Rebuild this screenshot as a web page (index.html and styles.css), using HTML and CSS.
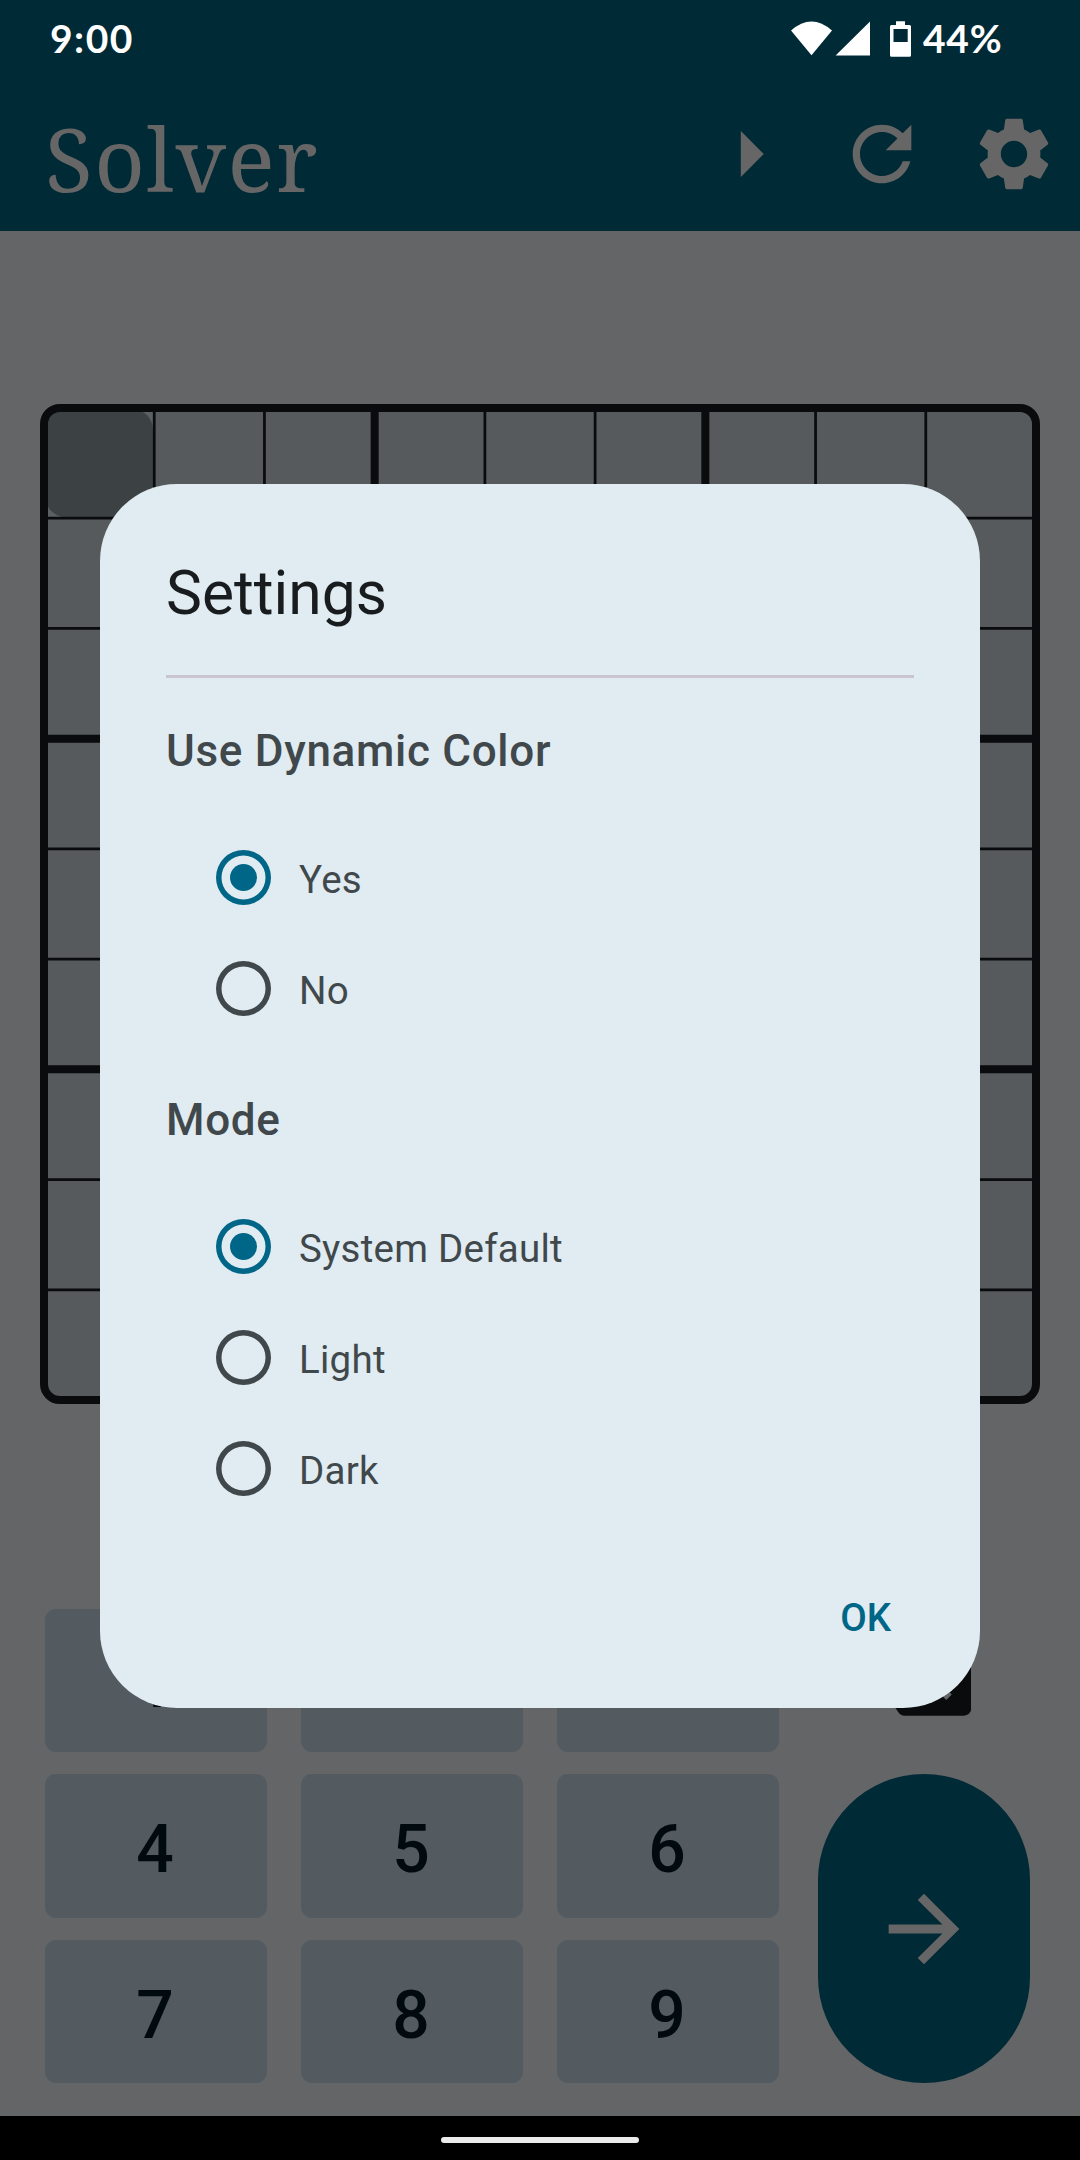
FILE: index.html
```html
<!DOCTYPE html>
<html lang="en">
<head>
<meta charset="utf-8">
<title>Solver</title>
<link rel="stylesheet" href="styles.css">
</head>
<body>
<div class="screen">
  <header class="top">
    <div class="status">
      <span class="clock">9:00</span>
      <svg class="status-icons" width="122" height="38" viewBox="790 20 122 38" fill="#fff">
        <path d="M791 30.5Q811.500 12.500 832 30.500L811.500 55.300z"/>
        <path d="M870 21.500V55.500H835.600z"/>
        <path fill-rule="evenodd" d="M896 21.300h9V25h4.500q1.500 0 1.500 1.500V55.300q0 1.500-1.500 1.500h-18q-1.500 0-1.500-1.500V26.500q0-1.500 1.500-1.500H896zM893.500 29v13h14.200V29z"/>
      </svg>
      <span class="battery">44%</span>
    </div>
    <div class="appbar">
      <h1 class="title">Solver</h1>
      <svg class="ico-play" viewBox="0 0 24 24"><path d="M10 17l5-5-5-5z"/></svg>
      <svg class="ico-refresh" viewBox="0 0 24 24"><path d="M17.650 6.350C16.200 4.900 14.210 4 12 4c-4.420 0-7.990 3.580-7.990 8s3.570 8 7.990 8c3.730 0 6.840-2.550 7.730-6h-2.080c-.82 2.330-3.040 4-5.650 4-3.310 0-6-2.690-6-6s2.690-6 6-6c1.660 0 3.140.69 4.220 1.780L13 11h7V4z"/></svg>
      <svg class="ico-settings" viewBox="0 0 24 24"><path d="M19.14,12.94c0.04-0.3,0.06-0.61,0.06-0.94c0-0.32-0.02-0.64-0.07-0.94l2.03-1.58c0.18-0.14,0.23-0.41,0.12-0.61l-1.92-3.32c-0.12-0.22-0.37-0.29-0.59-0.22l-2.39,0.96c-0.5-0.38-1.03-0.7-1.62-0.94L14.4,2.81c-0.04-0.24-0.24-0.41-0.48-0.41h-3.84c-0.24,0-0.43,0.17-0.47,0.41L9.25,5.35C8.66,5.59,8.12,5.92,7.63,6.29L5.24,5.33c-0.22-0.08-0.47,0-0.59,0.22L2.74,8.87C2.62,9.08,2.66,9.34,2.86,9.48l2.03,1.58C4.84,11.36,4.8,11.69,4.8,12s0.02,0.64,0.07,0.94l-2.03,1.58c-0.18,0.14-0.23,0.41-0.12,0.61l1.92,3.32c0.12,0.22,0.37,0.29,0.59,0.22l2.39-0.96c0.5,0.38,1.03,0.7,1.62,0.94l0.36,2.54c0.05,0.24,0.24,0.41,0.48,0.41h3.84c0.24,0,0.44-0.17,0.47-0.41l0.36-2.54c0.59-0.24,1.13-0.56,1.62-0.94l2.39,0.96c0.22,0.08,0.47,0,0.59-0.22l1.92-3.32c0.12-0.22,0.07-0.47-0.12-0.61L19.14,12.94z M12,15.6c-1.98,0-3.6-1.62-3.6-3.6s1.62-3.6,3.6-3.6s3.6,1.62,3.6,3.6S13.98,15.6,12,15.6z"/></svg>
    </div>
  </header>

  <main class="content">
    <svg class="board" viewBox="0 0 1000 1000">
      <rect class="cells" x="4" y="4" width="992" height="992" rx="16"/>
      <rect class="under" x="4" y="20" width="110" height="94"/>
      <rect class="under" x="20" y="4" width="94" height="94"/>
      <rect class="selected" x="5.400" y="5.400" width="107.500" height="107.500" rx="20"/>
      <path class="thin" d="M114.220 4V996M224.440 4V996M444.890 4V996M555.110 4V996M775.560 4V996M885.780 4V996M4 114.220H996M4 224.440H996M4 444.890H996M4 555.110H996M4 775.560H996M4 885.780H996"/>
      <path class="thick" d="M334.670 4V996M665.330 4V996M4 334.670H996M4 665.330H996"/>
      <rect class="thick" x="4" y="4" width="992" height="992" rx="16"/>
    </svg>

    <div class="pad">
      <div class="keys">
        <button class="key">1</button><button class="key">2</button><button class="key">3</button>
        <button class="key">4</button><button class="key">5</button><button class="key">6</button>
        <button class="key">7</button><button class="key">8</button><button class="key">9</button>
      </div>
      <div class="actions">
        <div class="erase">
          <svg class="ico-erase" viewBox="0 0 24 24"><path d="M22 3H7c-.69 0-1.23.35-1.590.88L0 12l5.410 8.110c.36.53.9.89 1.590.89h15c1.100 0 2-.9 2-2V5c0-1.100-.9-2-2-2zm-3 12.590L17.590 17 14 13.410 10.410 17 9 15.590 12.590 12 9 8.410 10.410 7 14 10.590 17.590 7 19 8.410 15.410 12 19 15.590z"/></svg>
        </div>
        <button class="go">
          <svg class="ico-go" viewBox="0 0 24 24"><path d="M12 4l-1.410 1.410L16.170 11H4v2h12.170l-5.580 5.590L12 20l8-8z"/></svg>
        </button>
      </div>
    </div>
  </main>

  <footer class="nav"><span class="pill"></span></footer>

  <section class="dialog">
    <h2 class="dialog-title">Settings</h2>
    <div class="divider"></div>
    <h3 class="group">Use Dynamic Color</h3>
    <div class="options">
      <label class="option"><span class="radio on"></span><span class="label">Yes</span></label>
      <label class="option"><span class="radio"></span><span class="label">No</span></label>
    </div>
    <h3 class="group">Mode</h3>
    <div class="options">
      <label class="option"><span class="radio on"></span><span class="label">System Default</span></label>
      <label class="option"><span class="radio"></span><span class="label">Light</span></label>
      <label class="option"><span class="radio"></span><span class="label">Dark</span></label>
    </div>
    <button class="ok">OK</button>
  </section>
</div>
</body>
</html>
```
FILE: styles.css
```css
* { box-sizing: border-box; }
body { margin: 0; background: #646567; font-family: Roboto, sans-serif; }
h1, h2, h3 { margin: 0; font-weight: 400; }
button { border: 0; padding: 0; font-family: inherit; }
svg { display: block; flex: none; }

.screen {
  position: relative;
  display: flex;
  flex-direction: column;
  width: 1080px;
  height: 2160px;
  overflow: hidden;
}

.top { height: 231px; background: #002a36; }
.status {
  display: flex;
  align-items: center;
  height: 77px;
  padding: 0 77px 0 50px;
  color: #fff;
  font: 700 39px/77px Lato, sans-serif;
}
.clock { flex: 1; letter-spacing: 1.500px; }
.status-icons { margin-right: 11px; }
.battery { width: 80px; letter-spacing: 0.700px; white-space: nowrap; }

.appbar {
  display: flex;
  align-items: center;
  height: 154px;
  padding: 0 22px 0 45px;
  fill: #666;
}
.title {
  flex: 1;
  padding-top: 8px;
  color: #666;
  font: 400 88px/120px "Noto Serif", "Droid Serif", "Liberation Serif", serif;
  letter-spacing: 1.400px;
}
.ico-play { width: 110px; height: 110px; margin-right: 33px; }
.ico-refresh { width: 88px; height: 88px; margin-right: 44px; }
.ico-settings { width: 88px; height: 88px; }

.content { flex: 1; padding: 173px 40px 0; }
.board { width: 1000px; height: 1000px; }
.cells { fill: #565a5c; }
.under { fill: #5c6062; }
.selected { fill: #3c4144; }
.thin, .thick { fill: none; stroke: #090b0c; }
.thin { stroke-width: 2.75px; }
.thick { stroke-width: 8px; }

.pad {
  display: flex;
  justify-content: space-between;
  margin-top: 205px;
  padding: 0 10px 0 5px;
}
.keys {
  display: grid;
  grid-template-columns: repeat(3, 222px);
  grid-auto-rows: 143.300px;
  gap: 22.200px 34px;
}
.key {
  padding: 7px 2px 0 0;
  border-radius: 11px;
  background: #535b60;
  color: #000a0f;
  font-size: 66px;
  font-weight: 500;
}
.actions { width: 212px; }
.erase {
  display: flex;
  align-items: center;
  justify-content: center;
  height: 143px;
  margin-bottom: 22px;
}
.ico-erase { width: 94.500px; height: 94.500px; fill: #090b0c; }
.go {
  display: flex;
  align-items: center;
  justify-content: center;
  width: 212px;
  height: 309px;
  border-radius: 106px;
  background: #002a36;
}
.ico-go { width: 106px; height: 106px; fill: #666; }

.nav {
  display: flex;
  justify-content: center;
  height: 44px;
  padding-top: 21px;
  background: #000;
}
.pill { width: 198px; height: 6px; border-radius: 3px; background: #ebebeb; }

/* Modal surface shown over the dimmed app */
.dialog {
  position: absolute;
  left: 100px;
  top: 484px;
  display: flex;
  flex-direction: column;
  width: 880px;
  height: 1224px;
  padding: 67px 66px 65px;
  border-radius: 77px;
  background: #e0ecf1;
}
.dialog-title { color: #191c1e; font-size: 60.500px; line-height: 86px; }
.divider { height: 3px; margin-top: 38px; background: #cac4d0; }
.group {
  margin-top: 40px;
  color: #40484c;
  font-size: 44px;
  font-weight: 500;
  line-height: 66px;
  letter-spacing: 0.700px;
}
.options { padding: 38px 0 0 50px; margin-bottom: 3px; }
.option { display: flex; align-items: center; height: 111px; }
.radio {
  display: flex;
  align-items: center;
  justify-content: center;
  width: 55px;
  height: 55px;
  border-radius: 50%;
  box-shadow: inset 0 0 0 5.500px #40484c;
}
.radio.on { box-shadow: inset 0 0 0 5.500px #006687; }
.radio.on::before {
  content: "";
  width: 27.500px;
  height: 27.500px;
  border-radius: 50%;
  background: #006687;
}
.label {
  padding: 4px 0 0 28px;
  color: #40484c;
  font-size: 38.500px;
  letter-spacing: 0.250px;
}
.ok {
  align-self: flex-end;
  margin: auto 23px 0 0;
  background: none;
  color: #006687;
  font-size: 38.500px;
  font-weight: 500;
  line-height: 50px;
}
```
